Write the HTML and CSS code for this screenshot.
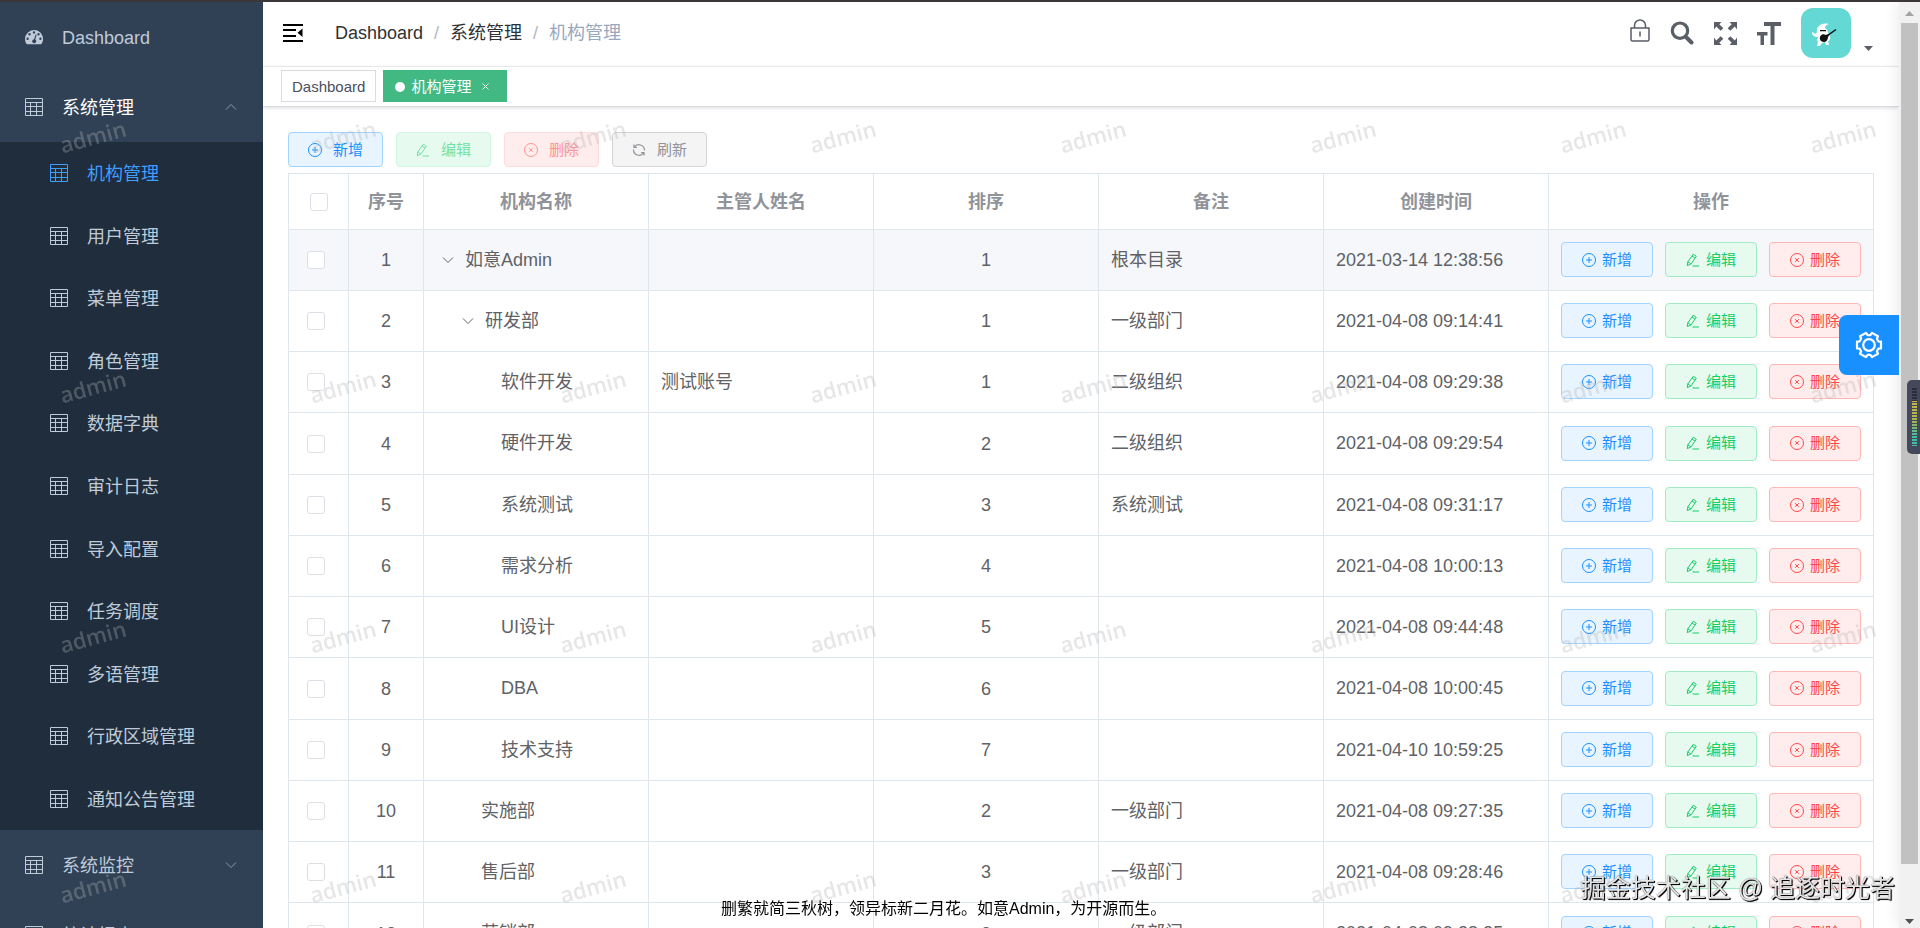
FILE: index.html
```html
<!DOCTYPE html>
<html lang="zh-CN">
<head>
<meta charset="utf-8">
<title>机构管理</title>
<link rel="stylesheet" href="styles.css">
</head>
<body>
<svg class="sprite" aria-hidden="true">
  <symbol id="i-grid" viewBox="0 0 18 18"><path fill="none" stroke="currentColor" d="M.5.5h17v17H.5zM.5 4.500h17M.5 8.500h17M.5 13.500h17M5.500 4.500v13M11.500 4.500v13"/></symbol>
  <symbol id="i-up" viewBox="0 0 12 8"><path fill="none" stroke="currentColor" d="M1 6.500 6 1.500l5 5"/></symbol>
  <symbol id="i-down" viewBox="0 0 12 8"><path fill="none" stroke="currentColor" d="M1 1.500 6 6.500l5-5"/></symbol>
  <symbol id="i-plus" viewBox="0 0 14 14"><path fill="none" stroke="currentColor" d="M7 .5a6.500 6.500 0 1 1 0 13a6.500 6.500 0 0 1 0-13zM4 7h6M7 4v6"/></symbol>
  <symbol id="i-edit" viewBox="0 0 14 14"><path fill="none" stroke="currentColor" d="M1.300 12.600 1.800 8.800 7.300 1.200 10.300 3.300 4.900 11zM6 3l3 2.200M1.800 8.800l3.100 2.200M6.500 13h6.500"/></symbol>
  <symbol id="i-del" viewBox="0 0 14 14"><path fill="none" stroke="currentColor" d="M7 .5a6.500 6.500 0 1 1 0 13a6.500 6.500 0 0 1 0-13zM5.200 5.200l3.600 3.600M8.800 5.200 5.200 8.800"/></symbol>
  <symbol id="i-ref" viewBox="0 0 14 14"><path fill="none" stroke="currentColor" stroke-width="1.200" d="M2 1.500v3h3M2.200 4.300A5.600 5.600 0 0 1 12.500 7.500M12 12.500v-3H9M11.800 9.700A5.600 5.600 0 0 1 1.500 6.500"/></symbol>
</svg>

<div class="app">
  <nav class="sidebar">
    <a class="menu" href="#">
      <svg class="ico" viewBox="0 0 18 18"><path fill="currentColor" fill-rule="evenodd" d="M9 2a9 9 0 0 0-9 9c0 1.700.5 3.400 1.400 4.800.2.300.5.400.8.400h13.600c.3 0 .6-.1.8-.4A9 9 0 0 0 9 2zM9 3.200a1.200 1.200 0 1 1 0 2.400a1.200 1.200 0 0 1 0-2.400zM4.500 5.100a1.200 1.200 0 1 1 0 2.400a1.200 1.200 0 0 1 0-2.400zM2.600 9.600a1.200 1.200 0 1 1 0 2.400a1.200 1.200 0 0 1 0-2.400zM15.400 9.600a1.200 1.200 0 1 1 0 2.400a1.200 1.200 0 0 1 0-2.400zM13.500 5.100a1.200 1.200 0 1 1 0 2.400a1.200 1.200 0 0 1 0-2.400zM10.600 6.500l1 .3-1.300 4.700a2 2 0 1 1-1.200-.3z"/></svg>
      <span>Dashboard</span></a>
    <a class="menu open" href="#"><svg class="ico"><use href="#i-grid"/></svg><span>系统管理</span><svg class="arrow"><use href="#i-up"/></svg></a>
    <div class="submenu">
      <a class="active" href="#"><svg class="ico"><use href="#i-grid"/></svg><span>机构管理</span></a>
      <a href="#"><svg class="ico"><use href="#i-grid"/></svg><span>用户管理</span></a>
      <a href="#"><svg class="ico"><use href="#i-grid"/></svg><span>菜单管理</span></a>
      <a href="#"><svg class="ico"><use href="#i-grid"/></svg><span>角色管理</span></a>
      <a href="#"><svg class="ico"><use href="#i-grid"/></svg><span>数据字典</span></a>
      <a href="#"><svg class="ico"><use href="#i-grid"/></svg><span>审计日志</span></a>
      <a href="#"><svg class="ico"><use href="#i-grid"/></svg><span>导入配置</span></a>
      <a href="#"><svg class="ico"><use href="#i-grid"/></svg><span>任务调度</span></a>
      <a href="#"><svg class="ico"><use href="#i-grid"/></svg><span>多语管理</span></a>
      <a href="#"><svg class="ico"><use href="#i-grid"/></svg><span>行政区域管理</span></a>
      <a href="#"><svg class="ico"><use href="#i-grid"/></svg><span>通知公告管理</span></a>
    </div>
    <a class="menu" href="#"><svg class="ico"><use href="#i-grid"/></svg><span>系统监控</span><svg class="arrow"><use href="#i-down"/></svg></a>
    <a class="menu" href="#"><svg class="ico"><use href="#i-grid"/></svg><span>统计报表</span><svg class="arrow"><use href="#i-down"/></svg></a>
  </nav>

  <div class="main">
    <header class="navbar">
      <button class="plain" aria-label="折叠菜单"><svg width="20" height="18" viewBox="0 0 20 18"><path fill="#000" d="M0 0h20v2H0zM0 5h13v2H0zM0 11h13v2H0zM0 16h20v2H0zM19.500 4.500v8.500l-5-4.250z"/></svg></button>
      <div class="crumbs"><a href="#">Dashboard</a><i>/</i><a href="#">系统管理</a><i>/</i><span>机构管理</span></div>
      <div class="tools">
        <button class="plain lock" aria-label="锁屏"><svg width="20" height="23" viewBox="0 0 20 23"><path fill="none" stroke="currentColor" stroke-width="1.500" d="M1 9h18v11.500a1.500 1.500 0 0 1-1.500 1.500h-15a1.500 1.500 0 0 1-1.500-1.500zM4.500 9V6.500a5.500 5.500 0 0 1 11 0V9M10 12.500v5"/></svg></button>
        <button class="plain" aria-label="搜索"><svg width="24" height="24" viewBox="0 0 24 24"><path fill="none" stroke="currentColor" stroke-width="3.200" d="M10 2a7.700 7.700 0 1 1 0 15.400a7.700 7.700 0 0 1 0-15.400z"/><path stroke="currentColor" stroke-width="4" stroke-linecap="round" d="M16.500 16.500l5 5"/></svg></button>
        <button class="plain" aria-label="全屏"><svg width="23" height="23" viewBox="0 0 23 23"><path fill="currentColor" d="M0 0h7.500L5.300 2.200l4 4-2.600 2.600-4.400-4.200L0 7.500zM23 0v7.500l-2.200-2.900-4.500 4.200-2.600-2.600 4-4L15.500 0zM0 23v-7.500l2.200 2.900 4.500-4.200 2.600 2.600-4 4L7.500 23zM23 23h-7.500l2.200-2.200-4-4 2.600-2.600 4.500 4.200 2.200-2.900z"/></svg></button>
        <button class="plain" aria-label="字号"><svg width="24" height="23" viewBox="0 0 24 23"><path fill="currentColor" d="M7 0h17v4h-6.500v19h-4V4H7zM0 10h10.500v3.500H7V23H3.500v-9.500H0z"/></svg></button>
        <button class="plain user" aria-label="用户">
          <svg width="50" height="50" viewBox="0 0 50 50"><rect width="50" height="50" rx="12" fill="#63d8d4"/><path fill="#fff" d="M16 24c-1-5 4-10 12-8-3 1-4 2-4 4 2 1 3 3 3 5l2 3c1 4-1 5-2 5l1 4-3 0-1-3-3 1-2 3-3 0 1-4c-1-1-1-3 0-5-3 0-6-1-6-5l4 2z"/><path fill="#111" d="M19 22h6v1.200h-6zM19.500 28c1-2 4-2 5-1l3-1 7-5 1 1-7 5-1.500 2c0 3-2 5-4 5-4 0-5-4-3.500-6z"/></svg>
          <svg class="caret" width="9" height="5" viewBox="0 0 9 5"><path fill="currentColor" d="M0 0h9L4.500 5z"/></svg>
        </button>
      </div>
    </header>
    <div class="tags">
      <a class="tag" href="#">Dashboard</a>
      <a class="tag on" href="#"><b></b>机构管理<svg width="7" height="7" viewBox="0 0 7 7"><path stroke="currentColor" d="M.5.5l6 6M6.500.5l-6 6"/></svg></a>
    </div>

    <section class="content">
      <div class="toolbar">
        <button class="btn add"><svg><use href="#i-plus"/></svg>新增</button>
        <button class="btn edit" disabled><svg><use href="#i-edit"/></svg>编辑</button>
        <button class="btn del" disabled><svg><use href="#i-del"/></svg>删除</button>
        <button class="btn ref"><svg><use href="#i-ref"/></svg>刷新</button>
      </div>
      <table>
        <colgroup><col class="c-check"><col class="c-no"><col><col><col><col><col><col class="c-ops"></colgroup>
        <thead><tr><th><input type="checkbox" aria-label="全选"></th><th>序号</th><th>机构名称</th><th>主管人姓名</th><th>排序</th><th>备注</th><th>创建时间</th><th>操作</th></tr></thead>
        <tbody>
          <tr class="hover"><td><input type="checkbox" aria-label="选择 1"></td><td>1</td><td class="name"><svg><use href="#i-down"/></svg>如意Admin</td><td></td><td>1</td><td>根本目录</td><td>2021-03-14 12:38:56</td><td><div class="ops"><button class="btn add"><svg><use href="#i-plus"/></svg>新增</button><button class="btn edit"><svg><use href="#i-edit"/></svg>编辑</button><button class="btn del"><svg><use href="#i-del"/></svg>删除</button></div></td></tr>
          <tr><td><input type="checkbox" aria-label="选择 2"></td><td>2</td><td class="name l2"><svg><use href="#i-down"/></svg>研发部</td><td></td><td>1</td><td>一级部门</td><td>2021-04-08 09:14:41</td><td><div class="ops"><button class="btn add"><svg><use href="#i-plus"/></svg>新增</button><button class="btn edit"><svg><use href="#i-edit"/></svg>编辑</button><button class="btn del"><svg><use href="#i-del"/></svg>删除</button></div></td></tr>
          <tr><td><input type="checkbox" aria-label="选择 3"></td><td>3</td><td class="name leaf3">软件开发</td><td>测试账号</td><td>1</td><td>二级组织</td><td>2021-04-08 09:29:38</td><td><div class="ops"><button class="btn add"><svg><use href="#i-plus"/></svg>新增</button><button class="btn edit"><svg><use href="#i-edit"/></svg>编辑</button><button class="btn del"><svg><use href="#i-del"/></svg>删除</button></div></td></tr>
          <tr><td><input type="checkbox" aria-label="选择 4"></td><td>4</td><td class="name leaf3">硬件开发</td><td></td><td>2</td><td>二级组织</td><td>2021-04-08 09:29:54</td><td><div class="ops"><button class="btn add"><svg><use href="#i-plus"/></svg>新增</button><button class="btn edit"><svg><use href="#i-edit"/></svg>编辑</button><button class="btn del"><svg><use href="#i-del"/></svg>删除</button></div></td></tr>
          <tr><td><input type="checkbox" aria-label="选择 5"></td><td>5</td><td class="name leaf3">系统测试</td><td></td><td>3</td><td>系统测试</td><td>2021-04-08 09:31:17</td><td><div class="ops"><button class="btn add"><svg><use href="#i-plus"/></svg>新增</button><button class="btn edit"><svg><use href="#i-edit"/></svg>编辑</button><button class="btn del"><svg><use href="#i-del"/></svg>删除</button></div></td></tr>
          <tr><td><input type="checkbox" aria-label="选择 6"></td><td>6</td><td class="name leaf3">需求分析</td><td></td><td>4</td><td></td><td>2021-04-08 10:00:13</td><td><div class="ops"><button class="btn add"><svg><use href="#i-plus"/></svg>新增</button><button class="btn edit"><svg><use href="#i-edit"/></svg>编辑</button><button class="btn del"><svg><use href="#i-del"/></svg>删除</button></div></td></tr>
          <tr><td><input type="checkbox" aria-label="选择 7"></td><td>7</td><td class="name leaf3">UI设计</td><td></td><td>5</td><td></td><td>2021-04-08 09:44:48</td><td><div class="ops"><button class="btn add"><svg><use href="#i-plus"/></svg>新增</button><button class="btn edit"><svg><use href="#i-edit"/></svg>编辑</button><button class="btn del"><svg><use href="#i-del"/></svg>删除</button></div></td></tr>
          <tr><td><input type="checkbox" aria-label="选择 8"></td><td>8</td><td class="name leaf3">DBA</td><td></td><td>6</td><td></td><td>2021-04-08 10:00:45</td><td><div class="ops"><button class="btn add"><svg><use href="#i-plus"/></svg>新增</button><button class="btn edit"><svg><use href="#i-edit"/></svg>编辑</button><button class="btn del"><svg><use href="#i-del"/></svg>删除</button></div></td></tr>
          <tr><td><input type="checkbox" aria-label="选择 9"></td><td>9</td><td class="name leaf3">技术支持</td><td></td><td>7</td><td></td><td>2021-04-10 10:59:25</td><td><div class="ops"><button class="btn add"><svg><use href="#i-plus"/></svg>新增</button><button class="btn edit"><svg><use href="#i-edit"/></svg>编辑</button><button class="btn del"><svg><use href="#i-del"/></svg>删除</button></div></td></tr>
          <tr><td><input type="checkbox" aria-label="选择 10"></td><td>10</td><td class="name leaf2">实施部</td><td></td><td>2</td><td>一级部门</td><td>2021-04-08 09:27:35</td><td><div class="ops"><button class="btn add"><svg><use href="#i-plus"/></svg>新增</button><button class="btn edit"><svg><use href="#i-edit"/></svg>编辑</button><button class="btn del"><svg><use href="#i-del"/></svg>删除</button></div></td></tr>
          <tr><td><input type="checkbox" aria-label="选择 11"></td><td>11</td><td class="name leaf2">售后部</td><td></td><td>3</td><td>一级部门</td><td>2021-04-08 09:28:46</td><td><div class="ops"><button class="btn add"><svg><use href="#i-plus"/></svg>新增</button><button class="btn edit"><svg><use href="#i-edit"/></svg>编辑</button><button class="btn del"><svg><use href="#i-del"/></svg>删除</button></div></td></tr>
          <tr><td><input type="checkbox" aria-label="选择 12"></td><td>12</td><td class="name leaf2">营销部</td><td></td><td>3</td><td>一级部门</td><td>2021-04-08 09:28:25</td><td><div class="ops"><button class="btn add"><svg><use href="#i-plus"/></svg>新增</button><button class="btn edit"><svg><use href="#i-edit"/></svg>编辑</button><button class="btn del"><svg><use href="#i-del"/></svg>删除</button></div></td></tr>
        </tbody>
      </table>
    </section>
  </div>

  <div class="scrollbar">
    <svg width="9" height="5" viewBox="0 0 9 5"><path fill="#a3a3a3" d="M0 5h9L4.500 0z"/></svg>
    <div class="thumb"></div>
    <svg width="9" height="5" viewBox="0 0 9 5"><path fill="#505050" d="M0 0h9L4.500 5z"/></svg>
  </div>
</div>

<div class="marks" aria-hidden="true">
  <span>admin</span><span>admin</span><span>admin</span><span>admin</span><span>admin</span><span>admin</span><span>admin</span><span>admin</span>
  <span>admin</span><span>admin</span><span>admin</span><span>admin</span><span>admin</span><span>admin</span><span>admin</span><span>admin</span>
  <span>admin</span><span>admin</span><span>admin</span><span>admin</span><span>admin</span><span>admin</span><span>admin</span><span>admin</span>
  <span>admin</span><span>admin</span><span>admin</span><span>admin</span><span>admin</span><span>admin</span><span>admin</span><span>admin</span>
</div>
<p class="motto">删繁就简三秋树，领异标新二月花。如意Admin，为开源而生。</p>
<button class="settings" aria-label="设置"><svg width="28" height="28" viewBox="0 0 28 28"><path fill="none" stroke="currentColor" stroke-width="2.200" stroke-linejoin="round" d="M23.300 10.300 26 10.600V17.400L23.300 17.700 21.900 20.200 23 22.700 17 26.100 15.400 23.900H12.600L11 26.100 5 22.700 6.100 20.200 4.700 17.700 2 17.400V10.600L4.700 10.300 6.100 7.800 5 5.300 11 1.900 12.600 4.100H15.400L17 1.900 23 5.300 21.900 7.800z"/><circle cx="14" cy="14" r="5.800" fill="none" stroke="currentColor" stroke-width="2.200"/></svg></button>
<div class="meter"><i></i></div>
<div class="credit">掘金技术社区 @ 追逐时光者</div>
</body>
</html>
```
FILE: styles.css
```css
* { box-sizing: border-box; }
body {
  margin: 0;
  height: 100vh;
  overflow: hidden;
  border-top: 2px solid #3b3638;
  background: #fff;
  color: #606266;
  font: 18px/24px "Liberation Sans", "Noto Sans CJK SC", sans-serif;
}
a { color: inherit; text-decoration: none; }
button { font: inherit; cursor: pointer; }
.sprite { position: absolute; width: 0; height: 0; }
.app { display: flex; height: 100%; overflow: hidden; }

.sidebar { flex: none; width: 263px; background: #304156; color: #bfcbd9; overflow: hidden; }
.menu { display: flex; align-items: center; height: 70px; padding: 0 26px 0 25px; }
.ico { flex: none; width: 18px; height: 18px; margin-right: 19px; }
.sidebar span { padding-top: 2px; }
.open span { color: #fff; }
.arrow { width: 12px; height: 8px; margin-left: auto; color: #8c98a8; }
.submenu { display: grid; grid-auto-rows: 1fr; height: 688px; background: #1f2d3d; }
.submenu a { display: flex; align-items: center; padding-left: 50px; }
.submenu .active { color: #409eff; }

.main { flex: 1; min-width: 0; }
.navbar { display: flex; align-items: center; height: 65px; padding: 0 26px 2px 20px; border-bottom: 1px solid #f0f0f0; }
.plain { display: flex; padding: 0; border: 0; background: none; color: #5a5e66; }
.crumbs { display: flex; gap: 11px; margin: 0 auto 0 32px; color: #97a8be; }
.crumbs a { color: #303133; }
.crumbs i { font-style: normal; color: #b3b8c2; }
.tools { display: flex; align-items: center; gap: 20px; }
.lock { padding-bottom: 5px; }
.user { align-items: flex-end; gap: 13px; }
.caret { margin-bottom: 7px; }
.tags { display: flex; gap: 7px; height: 40px; padding: 3px 18px; border-bottom: 1px solid #d8dce5; box-shadow: 0 1px 4px rgba(0, 0, 0, .14); }
.tag { display: flex; align-items: center; height: 32px; padding: 1px 10px 0; border: 1px solid #d8dce5; color: #495060; font-size: 15px; }
.tag.on { padding: 1px 17px 0 11px; border-color: #42b983; background: #42b983; color: #fff; }
.tag b { width: 10px; height: 10px; margin-right: 6px; border-radius: 50%; background: #fff; }
.tag svg { margin-left: 11px; }

.content { padding: 25px; }
.toolbar { display: flex; gap: 13px; margin-bottom: 6px; }
.btn { display: flex; align-items: center; justify-content: center; gap: 6px; height: 35px; padding: 0 20px; border: 1px solid; border-radius: 4px; font-size: 15px; line-height: 20px; white-space: nowrap; }
.btn svg { flex: none; width: 14px; height: 14px; }
.toolbar .btn { gap: 11px; padding: 0 19px; }
.add { color: #1890ff; background: #e8f4ff; border-color: #a3d3ff; }
.edit { color: #13ce66; background: #e7faf0; border-color: #a1ebc2; }
.del { color: #ff4949; background: #ffeded; border-color: #ffb6b6; }
.ref { color: #909399; background: #f4f4f5; border-color: #d3d4d6; }
.edit:disabled { color: #71e2a3; border-color: #d0f5e0; }
.del:disabled { color: #ff9292; border-color: #ffdbdb; }

table { width: 100%; table-layout: fixed; border-collapse: collapse; }
.c-check { width: 60px; }
.c-no { width: 75px; }
.c-ops { width: 325px; }
th, td { padding: 0 12px; border: 1px solid #dfe6ec; text-align: left; white-space: nowrap; }
th { height: 56px; color: #909399; text-align: center; }
td { height: 61px; padding-bottom: 1px; }
tr:nth-child(4n) td { height: 62px; }
th:first-child, td:first-child, td:nth-child(2), td:nth-child(5) { padding: 0; text-align: center; }
td:first-child { padding-right: 5px; }
.hover { background: #f5f7fa; }
input { appearance: none; display: block; width: 18px; height: 18px; margin: 0 auto; border: 1px solid #dcdfe6; border-radius: 3px; background: #fff; }
.name svg { width: 12px; height: 8px; margin: 0 11px 2px 6px; }
.name.l2 { padding-left: 32px; }
.name.leaf2 { padding-left: 57px; }
.name.leaf3 { padding-left: 77px; }
.ops { display: flex; gap: 12px; }

.scrollbar { flex: none; display: flex; flex-direction: column; align-items: center; justify-content: space-between; width: 21px; padding: 9px 2px 4px 1px; background: #f1f1f1; box-shadow: -2px 0 14px rgba(0, 0, 0, .08); }
.thumb { flex: 1; width: 17px; margin: 7px 0 55px; background: #c1c1c1; }

.marks { position: fixed; inset: 0; display: grid; grid-template-columns: repeat(8, 250px); grid-auto-rows: 250px; padding-left: 59px; overflow: hidden; pointer-events: none; }
.marks span { align-self: center; justify-self: start; margin-top: 22px; color: rgba(180, 180, 180, .33); font: 600 22px/30px "Open Sans", "Noto Sans", sans-serif; transform: rotate(-15deg); }
.motto { position: fixed; left: 721px; bottom: 8px; margin: 0; color: #000; font-size: 16px; line-height: 22px; }
.settings { position: fixed; top: 315px; right: 21px; display: grid; place-items: center; width: 60px; height: 60px; padding: 0; border: 0; border-radius: 8px 0 0 8px; background: #1890ff; color: #fff; }
.meter { position: fixed; top: 380px; right: 0; width: 13px; height: 74px; padding: 8px 3px 8px 5px; border-radius: 5px 0 0 5px; background: #45475a; }
.meter i { display: block; height: 100%; background: repeating-linear-gradient(transparent 0 2px, #45475a 2px 3px), linear-gradient(#2c2d3a 0 22%, #c9b64a 22%, #a9b552 55%, #3fc0a0 85%); }
.credit { position: fixed; right: 25px; bottom: 22px; color: #e4e4e4; font-size: 25px; line-height: 36px; text-shadow: 1px 1px 1px #000, 1px 1px 0 #333, 0 0 1px #555; }
```
